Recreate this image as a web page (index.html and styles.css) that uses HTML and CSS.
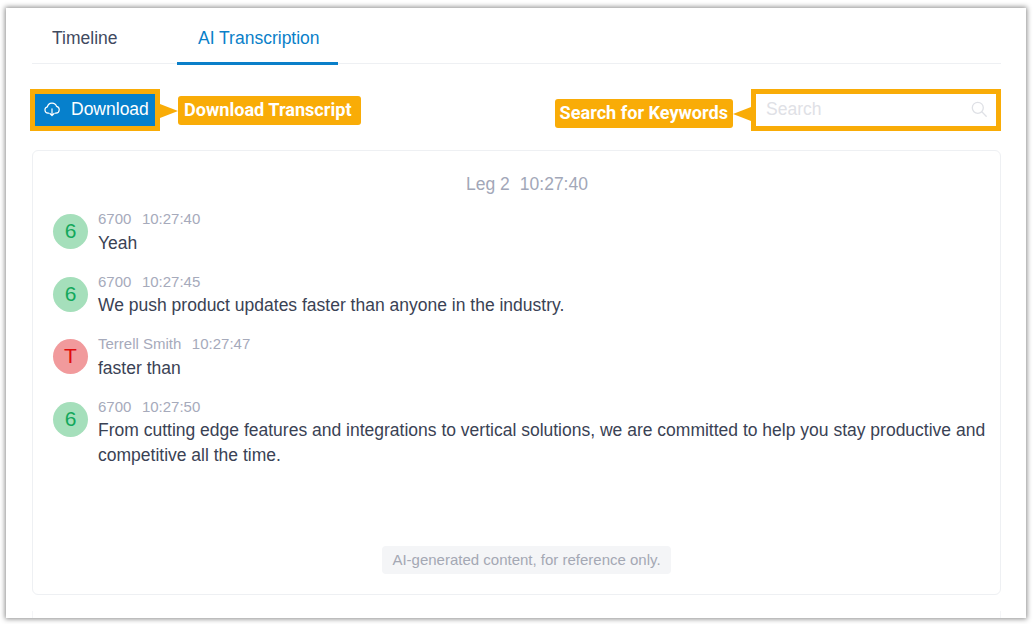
FILE: index.html
```html
<!DOCTYPE html>
<html lang="en">
<head>
<meta charset="utf-8">
<title>AI Transcription</title>
<link rel="stylesheet" href="styles.css">
</head>
<body>
<main class="panel">
  <nav class="tabs">
    <div class="tab">Timeline</div>
    <div class="tab tab-active">AI Transcription</div>
  </nav>
  <div class="toolbar">
    <div class="mark">
      <button class="download" type="button">
        <svg class="cloud" viewBox="0 0 16 16" width="16" height="16" fill="none" stroke="#fff" stroke-width="1.2" stroke-linecap="round" stroke-linejoin="round">
          <path d="M4.6 12.2H4a3.2 3.2 0 0 1-.6-6.3A4.7 4.7 0 0 1 12.500 5.300a3.500 3.500 0 0 1-.5 6.900h-.6"/>
          <path d="M8 7.800v6.700M5.900 12.500 8 14.600l2.100-2.100"/>
        </svg>
        <span>Download</span>
      </button>
      <div class="callout callout-right">
        <i class="arrow arrow-right"></i>
        <span class="label label-wide">Download Transcript</span>
      </div>
    </div>
    <div class="mark">
      <div class="search">
        <span class="placeholder">Search</span>
        <svg viewBox="0 0 16 16" width="16" height="16" fill="none" stroke="#dfe1e6" stroke-width="1.3" stroke-linecap="round">
          <circle cx="6.800" cy="6.800" r="5.500"/>
          <path d="M10.800 10.800 15.200 15.200"/>
        </svg>
      </div>
      <div class="callout callout-left">
        <span class="label label-narrow">Search for Keywords</span>
        <i class="arrow arrow-left"></i>
      </div>
    </div>
  </div>
  <section class="card">
    <h2 class="leg"><span>Leg 2</span><span>10:27:40</span></h2>
    <div class="msg">
      <div class="avatar green">6</div>
      <div class="body">
        <div class="meta"><span>6700</span><span>10:27:40</span></div>
        <p class="text">Yeah</p>
      </div>
    </div>
    <div class="msg m2">
      <div class="avatar green">6</div>
      <div class="body">
        <div class="meta"><span>6700</span><span>10:27:45</span></div>
        <p class="text">We push product updates faster than anyone in the industry.</p>
      </div>
    </div>
    <div class="msg m3">
      <div class="avatar red">T</div>
      <div class="body">
        <div class="meta"><span>Terrell Smith</span><span>10:27:47</span></div>
        <p class="text">faster than</p>
      </div>
    </div>
    <div class="msg m4">
      <div class="avatar green">6</div>
      <div class="body">
        <div class="meta"><span>6700</span><span>10:27:50</span></div>
        <p class="text">From cutting edge features and integrations to vertical solutions, we are committed to help you stay productive and competitive all the time.</p>
      </div>
    </div>
    <div class="notice"><span>AI-generated content, for reference only.</span></div>
  </section>
  <section class="card-next"></section>
</main>
</body>
</html>
```
FILE: styles.css
```css
* { box-sizing: border-box; }
html, body { margin: 0; height: 100%; background: #fff; overflow: hidden; }
body {
  padding: 8px 7px 6px 6px;
  font-family: "Liberation Sans", Arial, sans-serif;
  color: #3a4254;
}
.panel {
  height: 610px;
  padding: 0 25px 0 26px;
  background: #fff;
  box-shadow: 0 0 5px 1px rgba(0, 0, 0, .45);
  overflow: hidden;
}
.tabs {
  display: flex;
  height: 56px;
  border-bottom: 1px solid #eef0f3;
}
.tab {
  width: 145px;
  padding: 19px 0 0 20px;
  font-size: 17.500px;
  line-height: 22px;
  color: #3f4a5f;
}
.tab-active {
  width: 161px;
  height: 57px;
  padding-left: 21px;
  color: #0a7fc9;
  border-bottom: 3px solid #0a7fc9;
}
.toolbar {
  display: flex;
  justify-content: space-between;
  margin: 25px 0 0 -2px;
}
.mark { position: relative; }
.download {
  display: flex;
  align-items: center;
  gap: 11px;
  width: 130px;
  height: 42px;
  padding: 0 0 2px 9px;
  border: 5px solid #f9ac07;
  background: #0680cc;
  color: #fff;
  font: 17.500px "Liberation Sans", Arial, sans-serif;
}
.cloud { flex: none; }
.search {
  display: flex;
  align-items: center;
  justify-content: space-between;
  width: 250px;
  height: 42px;
  padding: 0 9px 2px 10px;
  border: 5px solid #f9ac07;
  background: #fff;
}
.placeholder { font-size: 17.500px; color: #dfe1e6; }
.callout {
  position: absolute;
  display: flex;
  align-items: center;
  font-family: Roboto, sans-serif;
  font-weight: 700;
  font-size: 18.100px;
  color: #fff;
}
.callout-right { left: 100%; top: 7px; }
.callout-left { right: 100%; top: 10px; }
.label {
  display: block;
  height: 29px;
  line-height: 28px;
  border-radius: 3px;
  background: #f9ac07;
  white-space: nowrap;
}
.label-wide { padding: 0 9px 0 6px; }
.label-narrow { padding: 0 5px; }
.arrow {
  display: block;
  width: 0;
  height: 0;
  border-top: 7px solid transparent;
  border-bottom: 7px solid transparent;
}
.arrow-right { border-left: 18px solid #f9ac07; }
.arrow-left { border-right: 18px solid #f9ac07; }
.card {
  position: relative;
  height: 445px;
  margin-top: 19px;
  padding: 22px 13px 0 20px;
  border: 1px solid #eef0f3;
  border-radius: 6px;
  background: #fff;
}
.card-next {
  height: 60px;
  margin-top: 16px;
  border: 1px solid #f4f5f7;
  border-top: 0;
}
.leg {
  display: flex;
  justify-content: center;
  gap: 10px;
  margin: 0 0 15px;
  padding-left: 14px;
  font-size: 17.500px;
  line-height: 22px;
  font-weight: 400;
  color: #a2a7b8;
}
.msg { display: flex; gap: 10px; }
.m2 { margin-top: 17px; }
.m3 { margin-top: 17px; }
.m4 { margin-top: 17px; }
.avatar {
  flex: none;
  width: 35px;
  height: 35px;
  margin-top: 4px;
  border-radius: 50%;
  text-align: center;
  font-size: 21px;
  line-height: 34px;
}
.green { background: #a5dfbb; color: #13a85c; }
.red { background: #f19a9c; color: #e00c0c; }
.body { min-width: 0; }
.meta {
  display: flex;
  gap: 10.500px;
  height: 18px;
  font-size: 15px;
  line-height: 18px;
  color: #a6aabb;
}
.text {
  margin: 3px 0 0;
  font-size: 17.500px;
  line-height: 25px;
  color: #3a4254;
}
.m2 .text, .m4 .text { margin-top: 2px; }
.notice {
  position: absolute;
  left: 0;
  right: 0;
  bottom: 20px;
  display: flex;
  justify-content: center;
  padding-left: 20px;
}
.notice span {
  height: 28px;
  padding: 0 10px;
  border-radius: 4px;
  background: #f4f5f7;
  font-size: 15px;
  line-height: 28px;
  color: #a4a8b4;
}
```
